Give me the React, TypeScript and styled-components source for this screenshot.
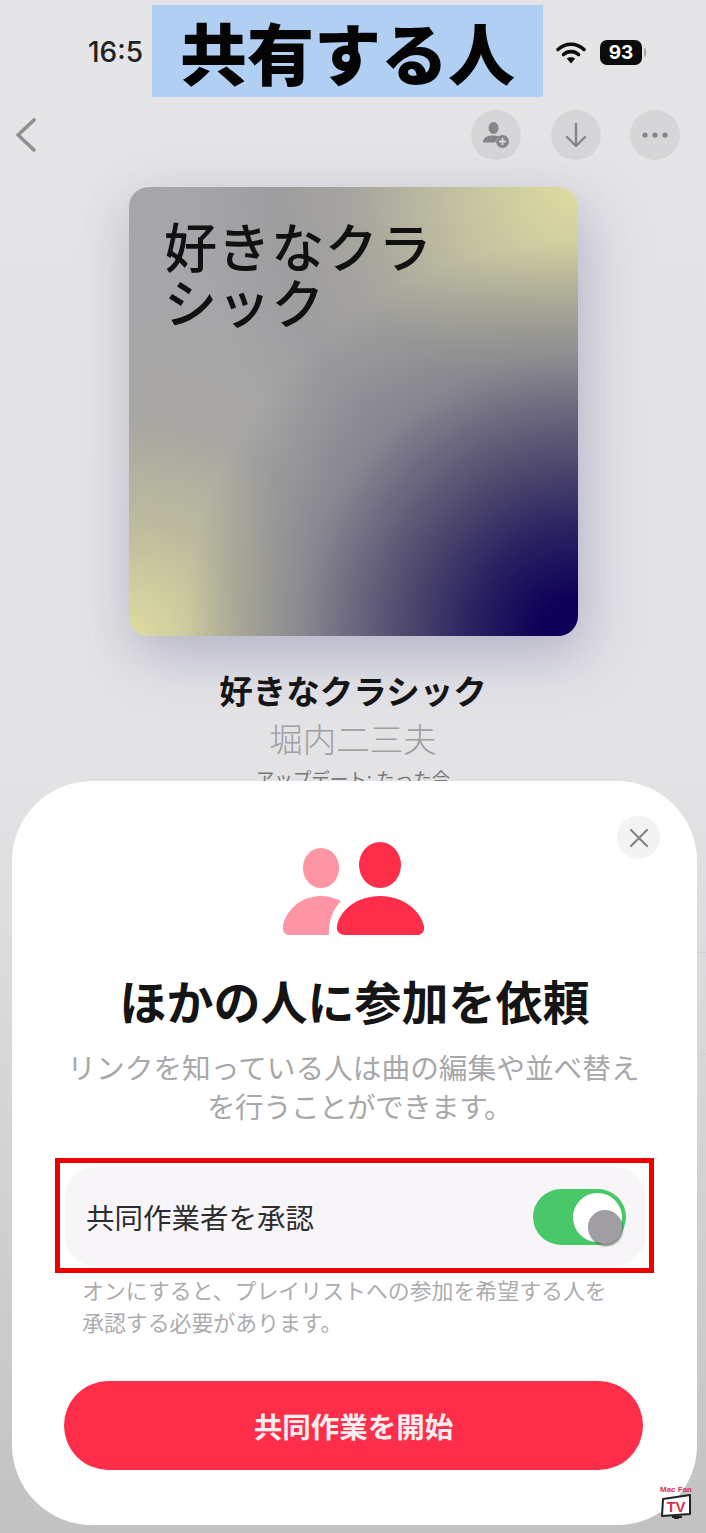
import styled, { createGlobalStyle } from "styled-components";

const GlobalStyle = createGlobalStyle`
  html, body {
    margin: 0;
    padding: 0;
    background: #d8d8da;
  }
  body {
    font-family: "Noto Sans CJK JP", "Noto Sans", sans-serif;
  }
`;

const Page = styled.div`
  position: relative;
  width: 706px;
  height: 1533px;
  overflow: hidden;
  display: flex;
  flex-direction: column;
  background: linear-gradient(180deg, #e5e4e6 0%, #e3e3e6 50%, #dcdcde 62%, #d0d0d1 80%, #c2c2c2 100%);
`;

const StatusBar = styled.div`
  height: 104px;
  box-sizing: border-box;
  padding: 0 64px 0 88px;
  display: flex;
  align-items: center;
  justify-content: space-between;
`;

const Time = styled.span`
  font-family: Inter, "Liberation Sans", sans-serif;
  font-size: 28px;
  font-weight: 500;
  color: #222;
`;

const StatusIcons = styled.div`
  display: flex;
  align-items: center;
  gap: 14px;
`;

const Battery = styled.div`
  position: relative;
  width: 42px;
  height: 25px;
  border-radius: 7px;
  background: #0c0c0c;
  color: #fff;
  font-family: Inter, "Liberation Sans", sans-serif;
  font-size: 19px;
  font-weight: 700;
  line-height: 25px;
  text-align: center;

  &::after {
    content: "";
    position: absolute;
    right: -4px;
    top: 8px;
    width: 2px;
    height: 9px;
    border-radius: 0 2px 2px 0;
    background: #a9a9a9;
  }
`;

const Banner = styled.div`
  position: absolute;
  left: 152px;
  top: 5px;
  width: 391px;
  height: 92px;
  background: #b1cff2;
  color: #050505;
  font-size: 67px;
  font-weight: 900;
  line-height: 92px;
  text-align: center;
`;

const NavBar = styled.div`
  height: 50px;
  margin-top: 6px;
  padding: 0 26px 0 14px;
  display: flex;
  align-items: center;
  justify-content: space-between;
`;

const NavActions = styled.div`
  display: flex;
  gap: 29.5px;
`;

const RoundButton = styled.div`
  width: 50px;
  height: 50px;
  border-radius: 50%;
  background: #d6d5d7;
  display: flex;
  align-items: center;
  justify-content: center;
`;

const Artwork = styled.div`
  width: 449px;
  height: 449px;
  margin: 27px 0 0 129px;
  box-sizing: border-box;
  padding: 30px 30px 0 35px;
  border-radius: 20px;
  background:
    radial-gradient(circle at 100% 100%, #0e0058 0%, #0e0058 6%, #252060 16%, rgba(78, 72, 108, 0.96) 28%, rgba(120, 120, 135, 0.65) 44%, rgba(150, 148, 155, 0) 62%),
    radial-gradient(circle at 100% 0%, rgb(222, 221, 160) 0%, rgba(200, 198, 158, 0.9) 18%, rgba(165, 163, 150, 0.6) 36%, rgba(140, 140, 140, 0.3) 48%, rgba(165, 164, 168, 0) 62%),
    radial-gradient(circle at 0% 100%, rgb(222, 221, 160) 0%, rgba(192, 190, 155, 0.85) 18%, rgba(170, 168, 155, 0.5) 34%, rgba(165, 164, 168, 0) 54%),
    #a6a5a9;
  box-shadow: 12px 22px 60px rgba(110, 110, 170, 0.3), -6px 12px 40px rgba(150, 150, 150, 0.2);
  color: #111;
  font-size: 53px;
  font-weight: 500;
  letter-spacing: 0.6px;
  line-height: 56px;
`;

const Title = styled.div`
  margin-top: 33px;
  text-align: center;
  color: #151515;
  font-size: 33.5px;
  font-weight: 700;
  line-height: 42px;
`;

const Author = styled.div`
  margin-top: 5px;
  text-align: center;
  color: #a0a0a1;
  font-size: 33.5px;
  font-weight: 300;
  line-height: 44px;
`;

const Updated = styled.div`
  margin-top: 5px;
  text-align: center;
  color: #77777a;
  font-size: 18.5px;
  line-height: 26px;
`;

const TrackList = styled.div`
  margin: 60px 0 0 100px;
`;

const TrackRow = styled.div`
  height: 101px;
  border-bottom: 1px solid #cfcfd1;
`;

const Sheet = styled.div`
  position: absolute;
  left: 12px;
  top: 781px;
  width: 685px;
  height: 744px;
  border-radius: 80px;
  background: #fff;
  display: flex;
  flex-direction: column;
`;

const CloseButton = styled.div`
  position: absolute;
  left: 605px;
  top: 35px;
  width: 43px;
  height: 43px;
  border-radius: 50%;
  background: #f3f3f4;
  display: flex;
  align-items: center;
  justify-content: center;
`;

const PeopleIcon = styled.svg`
  display: block;
  align-self: center;
  margin: 61px 0 0 -3px;
`;

const Heading = styled.div`
  margin-top: 35px;
  text-align: center;
  color: #151515;
  font-size: 47px;
  font-weight: 700;
  line-height: 60px;
`;

const Description = styled.div`
  margin: 17px 0 0 -2px;
  text-align: center;
  color: #a8a8aa;
  font-size: 28.7px;
  line-height: 39px;
`;

const DescriptionTail = styled.span`
  display: inline-block;
  margin-left: 12px;
  letter-spacing: -0.7px;
`;

const Highlight = styled.div`
  margin: 33px 43px 0;
  height: 115px;
  box-sizing: border-box;
  padding: 4px 4px 2px 5px;
  border: 5px solid #ec0000;
`;

const ToggleCard = styled.div`
  height: 99px;
  box-sizing: border-box;
  padding: 0 19px 0 21px;
  border-radius: 30px;
  background: #f7f5f8;
  display: flex;
  align-items: center;
  justify-content: space-between;
`;

const ToggleLabel = styled.span`
  color: #2c2c2e;
  font-size: 28.5px;
`;

const Toggle = styled.div`
  position: relative;
  width: 93px;
  height: 56px;
  border-radius: 28px;
  background: #48c868;
`;

const ToggleKnob = styled.div`
  position: absolute;
  left: 40px;
  top: 4px;
  width: 49px;
  height: 49px;
  border-radius: 50%;
  background: #fff;
`;

const ToggleTouch = styled.div`
  position: absolute;
  left: 55px;
  top: 21px;
  width: 34px;
  height: 34px;
  border-radius: 50%;
  background: #a09ea3;
  box-shadow: 1px 2px 2px rgba(40, 70, 50, 0.6);
`;

const Note = styled.div`
  margin: 1px 0 0 70px;
  color: #acacae;
  font-size: 21.9px;
  line-height: 32px;
`;

const StartButton = styled.div`
  margin: 43px 54px 0 52px;
  height: 89px;
  border-radius: 45px;
  background: #fe2d49;
  color: #fbeef0;
  font-size: 28.5px;
  font-weight: 700;
  line-height: 89px;
  text-align: center;
`;

const Watermark = styled.div`
  position: absolute;
  left: 658px;
  top: 1485px;
  width: 36px;
  display: flex;
  flex-direction: column;
  align-items: center;
`;

const WatermarkName = styled.span`
  color: #d8324a;
  font-family: "Liberation Sans", sans-serif;
  font-size: 8px;
  font-weight: 700;
  line-height: 9px;
  white-space: nowrap;
`;

const App = () => {
  return (
    <Page>
      <GlobalStyle />
      <StatusBar>
        <Time>16:5</Time>
        <StatusIcons>
          <svg width="30" height="24" viewBox="0 0 30 24" fill="none">
            <path d="M2 9.5C9.5 2.5 20.5 2.5 28 9.5" stroke="#0c0c0c" strokeWidth="3.6" strokeLinecap="round" />
            <path d="M7.5 14.5C11.8 10.6 18.2 10.6 22.5 14.5" stroke="#0c0c0c" strokeWidth="3.6" strokeLinecap="round" />
            <path d="M15 23.5L10.8 18.6C13.2 16.8 16.8 16.8 19.2 18.6Z" fill="#0c0c0c" />
          </svg>
          <Battery>93</Battery>
        </StatusIcons>
      </StatusBar>
      <Banner>共有する人</Banner>

      <NavBar>
        <svg width="24" height="36" viewBox="0 0 24 36" fill="none">
          <path d="M20 3L4 18L20 33" stroke="#8f8f91" strokeWidth="3.6" strokeLinecap="round" strokeLinejoin="round" />
        </svg>
        <NavActions>
          <RoundButton>
            <svg width="28" height="28" viewBox="0 0 28 28" fill="#858587">
              <ellipse cx="11.5" cy="7" rx="5" ry="6" />
              <path d="M1 21C1 16 6 14.5 11.5 14.5C13.5 14.5 15.3 14.7 16.9 15.2C14.9 16.6 13.6 18.8 13.5 21.5H2.5C1.6 21.5 1 21.6 1 21Z" />
              <circle cx="20.5" cy="20.5" r="6.5" />
              <path d="M20.5 17V24M17 20.5H24" stroke="#d6d5d7" strokeWidth="1.8" />
            </svg>
          </RoundButton>
          <RoundButton>
            <svg width="24" height="28" viewBox="0 0 24 28" fill="none">
              <path d="M12 3V25M3 16L12 25L21 16" stroke="#858587" strokeWidth="2.4" strokeLinecap="round" strokeLinejoin="round" />
            </svg>
          </RoundButton>
          <RoundButton>
            <svg width="30" height="8" viewBox="0 0 30 8" fill="#858587">
              <circle cx="5" cy="4" r="2.6" />
              <circle cx="15" cy="4" r="2.6" />
              <circle cx="25" cy="4" r="2.6" />
            </svg>
          </RoundButton>
        </NavActions>
      </NavBar>

      <Artwork>
        好きなクラ
        <br />
        シック
      </Artwork>
      <Title>好きなクラシック</Title>
      <Author>堀内二三夫</Author>
      <Updated>アップデート: たった今</Updated>
      <TrackList>
        <TrackRow />
        <TrackRow />
        <TrackRow />
        <TrackRow />
      </TrackList>

      <Sheet>
        <CloseButton>
          <svg width="20" height="20" viewBox="0 0 20 20" fill="none">
            <path d="M2 2L18 18M18 2L2 18" stroke="#858587" strokeWidth="2.2" strokeLinecap="round" />
          </svg>
        </CloseButton>
        <PeopleIcon width="141" height="93" viewBox="0 0 141 93">
          <ellipse cx="38" cy="26" rx="18" ry="20" fill="#fe95a4" />
          <path d="M6 93H46C45 80 50 67 58 59C52 56 45 54 38 54C18 54 3 68 0 84C-1 89 2 93 6 93Z" fill="#fe95a4" />
          <ellipse cx="97" cy="23" rx="21" ry="23" fill="#fe2d49" />
          <path d="M62 93H134C139 93 142 89 141 84C137 68 120 54 97 54C74 54 57 68 54 84C53 89 56 93 62 93Z" fill="#fe2d49" />
        </PeopleIcon>
        <Heading>ほかの人に参加を依頼</Heading>
        <Description>
          リンクを知っている人は曲の編集や並べ替え
          <br />
          <DescriptionTail>を行うことができます。</DescriptionTail>
        </Description>
        <Highlight>
          <ToggleCard>
            <ToggleLabel>共同作業者を承認</ToggleLabel>
            <Toggle>
              <ToggleKnob />
              <ToggleTouch />
            </Toggle>
          </ToggleCard>
        </Highlight>
        <Note>
          オンにすると、プレイリストへの参加を希望する人を
          <br />
          承認する必要があります。
        </Note>
        <StartButton>共同作業を開始</StartButton>
      </Sheet>

      <Watermark>
        <WatermarkName>Mac Fan</WatermarkName>
        <svg width="32" height="26" viewBox="0 0 32 26">
          <path d="M3 5L30 1V20L2 22Z" fill="#fff" stroke="#222" strokeWidth="2" strokeLinejoin="round" />
          <text x="16" y="18" textAnchor="middle" fontFamily="Liberation Sans, sans-serif" fontSize="15" fontWeight="700" fill="#d8324a">
            TV
          </text>
          <path d="M12 22H22V24H19V25H14V24H12Z" fill="#222" />
        </svg>
      </Watermark>
    </Page>
  );
};

export default App;
